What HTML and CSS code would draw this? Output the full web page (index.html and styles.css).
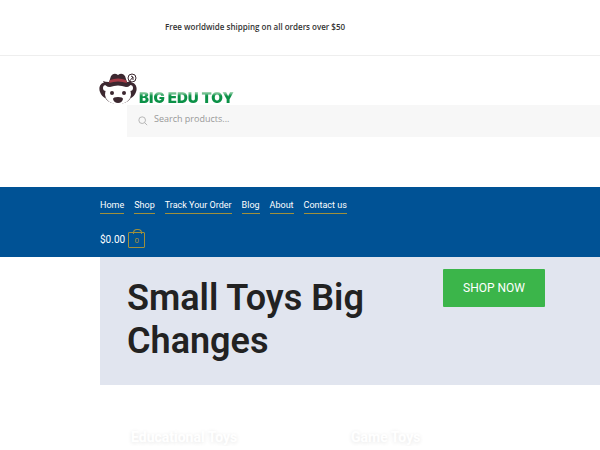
FILE: index.html
```html
<!DOCTYPE html>
<html lang="en">
	<head>
		<meta charset="utf-8">
		<title>Big Edu Toy</title>
		<link rel="stylesheet" href="styles.css">
	</head>
	<body>
		<div class="top-bar">
			<p>Free worldwide shipping on all orders over $50</p>
		</div>
		<header class="site-header">
			<a class="logo" href="#">
				<svg class="bear" viewBox="0 0 38 32" aria-hidden="true">
					<path d="M9 10C2 8-1 14 1 19c1 3 3 5 5 6l5-12zM29 10c7-2 10 4 8 9-1 3-3 5-5 6l-5-12z" fill="#3c2830"/>
					<path d="M5 21q2 8 10 9M33 21q-2 8-10 9" fill="none" stroke="#3c2830"/>
					<path d="M6 22Q6 11 19 11t13 11q-2 9-13 9T6 22z" fill="#fff"/>
					<circle cx="7" cy="15" r="3" fill="#fff"/>
					<circle cx="31" cy="15" r="3" fill="#fff"/>
					<path d="M10 9L12 3q3-4 7-1 4-3 7 1l2 6q4 0 5-1-1 6-6 6-8-3-16 0-5 0-7-6 2 1 6 1z" fill="#3c2830"/>
					<path d="M11 7q8-3 16 0l1 3q-9-3-18 0z" fill="#a63a46"/>
					<circle cx="33" cy="5" r="4" fill="#fff" stroke="#3c2830"/>
					<path d="M29 10l5-6M32 3l2 1v3" fill="none" stroke="#3c2830"/>
					<circle cx="13" cy="20" r="2" fill="#3c2830"/>
					<circle cx="25" cy="20" r="2" fill="#3c2830"/>
					<path d="M14 26q0-2 5-2t5 2q-1 4-5 4t-5-4z" fill="#3c2830"/>
				</svg>
				<span class="logo-name">BIG EDU TOY</span>
			</a>
			<form class="search">
				<svg viewBox="0 0 12 12" aria-hidden="true">
					<circle cx="5" cy="5" r="4"/>
					<path d="M8 8l3 3"/>
				</svg>
				<input type="search" placeholder="Search products..." aria-label="Search products">
			</form>
		</header>
		<nav class="main-nav">
			<ul>
				<li><a href="#">Home</a></li>
				<li><a href="#">Shop</a></li>
				<li><a href="#">Track Your Order</a></li>
				<li><a href="#">Blog</a></li>
				<li><a href="#">About</a></li>
				<li><a href="#">Contact us</a></li>
			</ul>
			<a class="cart" href="#">$0.00 <span class="count">0</span></a>
		</nav>
		<main>
			<section class="hero">
				<h1>Small Toys Big Changes</h1>
				<a class="button" href="#">SHOP NOW</a>
			</section>
			<section class="categories">
				<h2>Educational Toys</h2>
				<h2>Game Toys</h2>
			</section>
		</main>
	</body>
</html>
```
FILE: styles.css
```css
* {
	box-sizing: border-box;
}
body {
	margin: 0;
	background: #fff;
	color: #222;
	font: 10px/16px Roboto, "Liberation Sans", sans-serif;
	overflow-x: hidden;
}
a {
	color: inherit;
	text-decoration: none;
}

.top-bar {
	padding: 19px 165px 20px;
	border-bottom: 1px solid #eee;
	color: #333;
	font-family: "Open Sans", sans-serif;
	font-size: 8px;
	font-weight: 600;
	white-space: nowrap;
}
.top-bar p {
	margin: 0;
}

.site-header {
	padding: 17px 0 50px 99px;
}
.logo {
	display: flex;
	align-items: flex-end;
	width: max-content;
	gap: 2px;
}
.bear {
	width: 38px;
	height: 32px;
}
.logo-name {
	background: linear-gradient(#9fd4b0 10%, #0b9147 35%);
	-webkit-background-clip: text;
	background-clip: text;
	color: transparent;
	font: 900 15px/14px Inter, sans-serif;
}
.search {
	display: flex;
	align-items: center;
	gap: 6px;
	height: 32px;
	margin-left: 28px;
	padding: 0 0 4px 11px;
	background: #f7f7f7;
}
.search svg {
	width: 10px;
	height: 10px;
	margin-top: 3px;
	fill: none;
	stroke: #aaa;
}
.search input {
	flex: 1;
	padding: 0;
	border: 0;
	outline: 0;
	background: none;
	font: 9px/16px "Open Sans", sans-serif;
}
.search input::placeholder {
	color: #999;
}

.main-nav {
	padding: 10px 0 9px 100px;
	background: #005295;
	color: #fff;
}
.main-nav ul {
	display: flex;
	gap: 10px;
	margin: 0 0 18px;
	padding: 0;
	font-size: 9px;
	list-style: none;
}
.main-nav li a {
	display: block;
	border-bottom: 1px solid #a0903c;
	white-space: nowrap;
}
.cart {
	display: flex;
	align-items: center;
	gap: 3px;
	width: max-content;
}
.count {
	position: relative;
	width: 17px;
	height: 16px;
	border: 1px solid #a0903c;
	border-radius: 1px;
	color: #a0903c;
	font-size: 8px;
	line-height: 15px;
	text-align: center;
}
.count:before {
	content: "";
	position: absolute;
	top: -4px;
	left: 4px;
	width: 7px;
	height: 4px;
	border: 1px solid #a0903c;
	border-bottom: 0;
	border-radius: 4px 4px 0 0;
}

.hero {
	display: flex;
	align-items: flex-start;
	margin-left: 100px;
	padding: 12px 0 22px 27px;
	background: #e1e5ef;
}
.hero h1 {
	flex: 0 0 316px;
	margin: 0;
	padding: 8px 60px 0 0;
	font-size: 36px;
	font-weight: 600;
	line-height: 43px;
}
.button {
	padding: 11px 20px;
	border-radius: 1px;
	background: #3bb54a;
	color: #fff;
	font-size: 12px;
}

.categories {
	display: grid;
	grid-template-columns: 220px 220px;
	padding: 43px 0 0 131px;
}
.categories h2 {
	margin: 0;
	color: #fff;
	font-size: 14px;
	line-height: 18px;
	text-shadow: 0 1px 4px #e4e4e4;
}
```
